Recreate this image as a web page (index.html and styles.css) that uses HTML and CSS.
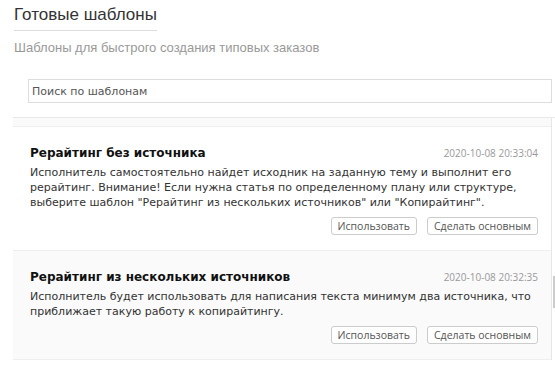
FILE: index.html
```html
<!DOCTYPE html>
<html lang="ru">
<head>
  <meta charset="UTF-8">
  <title>Готовые шаблоны</title>
  <link rel="stylesheet" href="styles.css">
</head>
<body>
  <div class="page-head">
    <h1 class="page-title">Готовые шаблоны</h1>
    <div class="page-sub">Шаблоны для быстрого создания типовых заказов</div>
  </div>
  <div class="search-row">
    <input class="search" type="text" placeholder="Поиск по шаблонам">
  </div>
  <div class="list">
    <div class="items">
      <div class="tpl alt tpl-tail"></div>
      <div class="tpl">
        <div class="tpl-head">
          <span class="tpl-name">Рерайтинг без источника</span>
          <span class="tpl-date">2020-10-08 20:33:04</span>
        </div>
        <div class="tpl-desc">Исполнитель самостоятельно найдет исходник на заданную тему и выполнит его рерайтинг. Внимание! Если нужна статья по определенному плану или структуре, выберите шаблон "Рерайтинг из нескольких источников" или "Копирайтинг".</div>
        <div class="tpl-actions">
          <button class="btn">Использовать</button>
          <button class="btn">Сделать основным</button>
        </div>
      </div>
      <div class="tpl alt">
        <div class="tpl-head">
          <span class="tpl-name">Рерайтинг из нескольких источников</span>
          <span class="tpl-date">2020-10-08 20:32:35</span>
        </div>
        <div class="tpl-desc">Исполнитель будет использовать для написания текста минимум два источника, что приближает такую работу к копирайтингу.</div>
        <div class="tpl-actions">
          <button class="btn">Использовать</button>
          <button class="btn">Сделать основным</button>
        </div>
      </div>
    </div>
    <div class="scrollbar"><div class="thumb"></div></div>
  </div>
</body>
</html>
```

FILE: styles.css
```css
body {
  margin: 0;
  font-family: "DejaVu Sans", Verdana, sans-serif;
  color: #333;
  background: #fff;
  overflow: hidden;
}
.page-head {
  padding: 4px 0 0 14px;
}
.page-title {
  display: inline-block;
  margin: 0;
  padding-bottom: 5px;
  border-bottom: 1px solid #ddd;
  font-family: "Liberation Sans", Arial, sans-serif;
  font-size: 17px;
  font-weight: normal;
  line-height: 21px;
  color: #333;
}
.page-sub {
  margin-top: 9px;
  font-family: "Liberation Sans", Arial, sans-serif;
  font-size: 13px;
  line-height: 16px;
  color: #999;
}
.search-row {
  padding: 23px 3px 0 28px;
}
.search {
  display: block;
  width: 100%;
  box-sizing: border-box;
  height: 24px;
  margin: 0;
  padding: 0 3px;
  border: 1px solid #ddd;
  font-family: "DejaVu Sans", Verdana, sans-serif;
  font-size: 11px;
  color: #333;
  outline: none;
}
.search::placeholder {
  color: #555;
}
.list {
  display: flex;
  margin: 14px 0 0 13px;
  border-top: 1px solid #e8e8e8;
}
.items {
  flex: 1;
}
.tpl {
  padding: 17px 13px 15px 17px;
  border-bottom: 1px solid #eee;
  background: #fff;
}
.tpl.alt {
  background: #fafafa;
}
.tpl.tpl-tail {
  height: 8px;
  padding: 0;
}
.tpl-head {
  display: flex;
  justify-content: space-between;
  align-items: baseline;
}
.tpl-name {
  font-size: 12px;
  font-weight: bold;
  color: #111;
  line-height: 18px;
}
.tpl-date {
  font-family: "Open Sans", sans-serif;
  font-size: 10px;
  color: #999;
}
.tpl-desc {
  margin-top: 3px;
  font-size: 11px;
  line-height: 15px;
  color: #333;
}
.tpl-actions {
  display: flex;
  justify-content: flex-end;
  gap: 10px;
  margin-top: 7px;
}
.btn {
  height: 18px;
  margin: 0;
  padding: 0 6px;
  border: 1px solid #ccc;
  border-radius: 3px;
  background: #fff;
  font-family: "Open Sans", sans-serif;
  font-size: 10.5px;
  color: #555;
  line-height: 16px;
}
.scrollbar {
  width: 3px;
  border-left: 1px solid #e6e6e6;
  background: #fff;
  position: relative;
}
.thumb {
  position: absolute;
  right: 0;
  top: 158px;
  width: 2px;
  height: 32px;
  background: #ccc;
}
```
